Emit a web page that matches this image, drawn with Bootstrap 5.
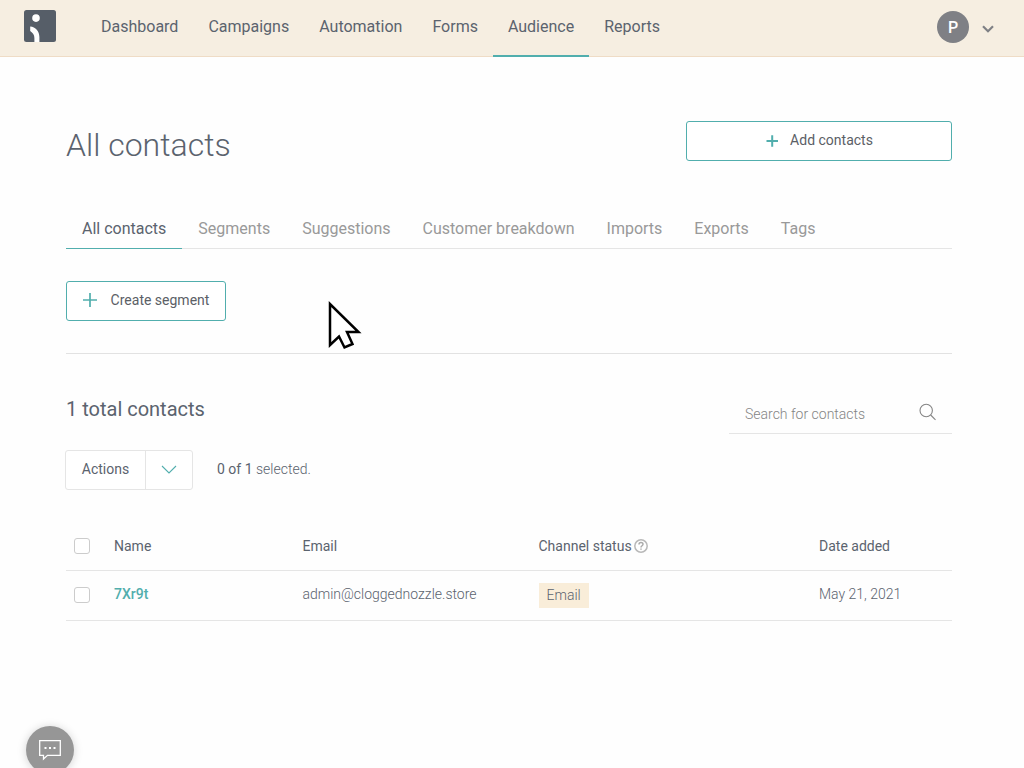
<!DOCTYPE html>
<html lang="en">
<head>
<meta charset="utf-8">
<meta name="viewport" content="width=device-width, initial-scale=1">
<title>All contacts</title>
<link href="https://cdn.jsdelivr.net/npm/bootstrap@5.3.0/dist/css/bootstrap.min.css" rel="stylesheet">
<script src="https://cdn.jsdelivr.net/npm/bootstrap@5.3.0/dist/js/bootstrap.bundle.min.js" defer></script>
<style>
body{font-family:Roboto,sans-serif;color:#5b636e;background:#fefefe;height:768px;overflow:hidden;font-size:14px;line-height:20px}
.topbar{height:57px;background:#f6eee1;border-bottom:1px solid #efdcc6;padding:0 28px 0 24px}
.logo{margin:10px 30px 0 0}
.topbar .nav-link{font-size:16px;line-height:24px;color:#5b636e;padding:15px 15px 16px;height:57px;border-bottom:2px solid transparent}
.topbar .nav-link.active{border-color:#51aead}
.avatar{width:32px;height:32px;margin-top:11px;background:#7f8085;color:#fff;font-size:16px;font-weight:500;padding-top:1px}
.account-caret{margin:22px 0 0 12px}
.page{width:886px;margin-left:66px;padding-top:64px}
h1{font-size:32px;font-weight:300;line-height:40px;margin:4px 0 0}
.btn-line{height:40px;border:1px solid #51aead;border-radius:3px;color:#5b6066;font-size:14px;line-height:20px;padding:0 0 2px;background:#fff}
.add-btn{width:266px}
.add-btn svg{margin-right:9px}
.seg-btn{width:160px}
.seg-btn svg{margin-right:12px}
.tabs{margin-top:48px;height:40px;border-bottom:1px solid #e5e5e5}
.tabs .nav-link{font-size:16px;line-height:24px;color:#999;padding:8px 16px 7px;height:40px;border-bottom:1px solid transparent}
.tabs .nav-link.active{color:#5b636e;border-color:#51aead}
.heading-row{height:40px}
.segments{padding:32px 0;border-bottom:1px solid #e2e2e2}
h2{font-size:20px;font-weight:400;line-height:28px;margin:41px 0 0}
.search{width:223px;height:40px;margin-top:40px;padding:0 15px 0 16px;border-bottom:1px solid #e5e5e5}
.search input{font-size:14px;font-weight:300;width:150px;color:#8a8a8a;line-height:20px}
.search input::placeholder{color:#858585;opacity:1}
.actions-row{margin-top:16px}
.actions{width:128px;height:40px;margin-left:-1px;border:1px solid #e5e5e5;border-radius:3px;background:#fff}
.actions button{font-size:14px;line-height:20px;color:#5b636e;padding:0 0 2px;border:0;border-radius:0}
.actions button+button{border-left:1px solid #e5e5e5;width:47px}
.picked{margin:0 0 2px 24px}
.contacts{table-layout:fixed;width:886px;margin:31px 0 0;font-size:14px;--bs-table-bg:transparent;color:#5b636e;--bs-table-color:#5b636e}
.contacts>:not(caption)>*>*{height:50px;padding:0;border-bottom:1px solid #e5e5e5;vertical-align:middle;font-weight:400}
.contacts>thead>*>*{height:49px;padding-top:2px}
.contacts>tbody>*>*{font-weight:300;padding-bottom:3px}
.contacts .form-check-input{display:block;width:16px;height:16px;margin:0 0 0 8px;border:1px solid #ccc;border-radius:3px;background-color:#fff}
.contacts td .form-check-input{position:relative;top:1px}
.contacts a{color:#51aead;font-weight:500}
.help-icon{margin:-4px 0 0 -1px}
.chip{display:inline-block;background:#f9edd9;height:25px;line-height:25px;padding:0 8px;position:relative;top:2px;vertical-align:middle}
.chat{position:fixed;left:26px;top:726px;width:48px;height:48px;background:#969696;box-shadow:0 1px 10px rgba(0,0,0,.18)}
.pointer{position:absolute;left:326px;top:300px}
</style>
</head>
<body>
<header class="topbar d-flex align-items-start">
  <svg class="logo flex-shrink-0" width="32" height="32" viewBox="0 0 32 32"><rect width="32" height="32" rx="2.5" fill="#565e68"/><circle cx="12" cy="8.1" r="3.8" fill="#fff"/><path d="M6.2 16.6C11.5 17 15.4 21.5 15.4 27V32H10.4V28C10.4 24.5 8.8 23.2 6.2 21Z" fill="#fff"/></svg>
  <nav class="nav flex-nowrap">
    <a class="nav-link" href="#">Dashboard</a><a class="nav-link" href="#">Campaigns</a><a class="nav-link" href="#">Automation</a><a class="nav-link" href="#">Forms</a><a class="nav-link active" href="#">Audience</a><a class="nav-link" href="#">Reports</a>
  </nav>
  <div class="ms-auto d-flex">
    <div class="avatar rounded-circle d-flex align-items-center justify-content-center">P</div>
    <svg class="account-caret" width="15" height="14" viewBox="0 0 15 14" fill="none" stroke="#7f8085" stroke-width="2.2"><path d="M2 4.2l5 5 5-5"/></svg>
  </div>
</header>
<main class="page">
  <div class="heading-row d-flex justify-content-between align-items-start">
    <h1>All contacts</h1>
    <button class="btn btn-line add-btn d-flex align-items-center justify-content-center"><svg width="16" height="16" viewBox="0 0 16 16" stroke="#51aead" stroke-width="2"><path d="M1.5 9h11.5M7.2 3.2v11.5"/></svg><span>Add contacts</span></button>
  </div>
  <nav class="tabs nav flex-nowrap">
    <a class="nav-link active" href="#">All contacts</a><a class="nav-link" href="#">Segments</a><a class="nav-link" href="#">Suggestions</a><a class="nav-link" href="#">Customer breakdown</a><a class="nav-link" href="#">Imports</a><a class="nav-link" href="#">Exports</a><a class="nav-link" href="#">Tags</a>
  </nav>
  <div class="segments">
    <button class="btn btn-line seg-btn d-flex align-items-center justify-content-center"><svg width="16" height="16" viewBox="0 0 16 16" stroke="#51aead" stroke-width="1.7"><path d="M0 8h14M7 1v14"/></svg><span>Create segment</span></button>
  </div>
  <div class="d-flex justify-content-between align-items-start">
    <h2>1 total contacts</h2>
    <div class="search d-flex align-items-center justify-content-between">
      <input class="border-0 bg-transparent p-0" placeholder="Search for contacts">
      <svg class="mb-1" width="18" height="18" viewBox="0 0 18 18" fill="none" stroke="#858585" stroke-width="1.1"><circle cx="7.2" cy="7.5" r="6.2"/><path d="M11.7 12l4.8 4.8"/></svg>
    </div>
  </div>
  <div class="actions-row d-flex align-items-center">
    <div class="actions d-flex">
      <button class="btn flex-fill">Actions</button><button class="btn"><svg width="16" height="10" viewBox="0 0 16 10" fill="none" stroke="#51aead" stroke-width="1.1"><path d="M1 1l7 7 7-7"/></svg></button>
    </div>
    <div class="picked">0 of 1 <span class="fw-light">selected.</span></div>
  </div>
  <table class="table contacts">
    <colgroup><col style="width:48px"><col style="width:188.5px"><col style="width:236px"><col style="width:280.5px"><col></colgroup>
    <thead><tr><th><input class="form-check-input" type="checkbox"></th><th>Name</th><th>Email</th><th>Channel status <svg class="help-icon" width="14" height="14" viewBox="0 0 14 14" fill="none"><circle cx="7" cy="7" r="6.2" stroke="#b8b8b8" stroke-width="1.5"/><path d="M5 5.5C5 2.9 9 2.9 9 5.3C9 6.8 7 6.7 7 8.5M7 9.5v1.3" stroke="#aaa" stroke-width="1.5"/></svg></th><th>Date added</th></tr></thead>
    <tbody><tr><td><input class="form-check-input" type="checkbox"></td><td><a class="text-decoration-none" href="#">7Xr9t</a></td><td>admin@cloggednozzle.store</td><td><span class="chip">Email</span></td><td>May 21, 2021</td></tr></tbody>
  </table>
</main>
<button class="chat btn rounded-circle p-0 border-0" aria-label="Chat"><svg class="d-block mx-auto" width="24" height="22" viewBox="0 0 24 22" fill="none" stroke="#fff" stroke-width="1.3"><path d="M1.7 1.7h20.6v14.6H9.5L5.5 20v-3.7H1.7z"/><path d="M6.5 9h2M11 9h2M15.5 9h2" stroke-width="2"/></svg></button>
<svg class="pointer" width="38" height="52" viewBox="0 0 38 52"><path d="M4 4v41l9-8.5 5.5 11 8-3.5-5.5-12h11.5z" fill="#fff" stroke="#000" stroke-width="2.5"/></svg>
</body>
</html>
